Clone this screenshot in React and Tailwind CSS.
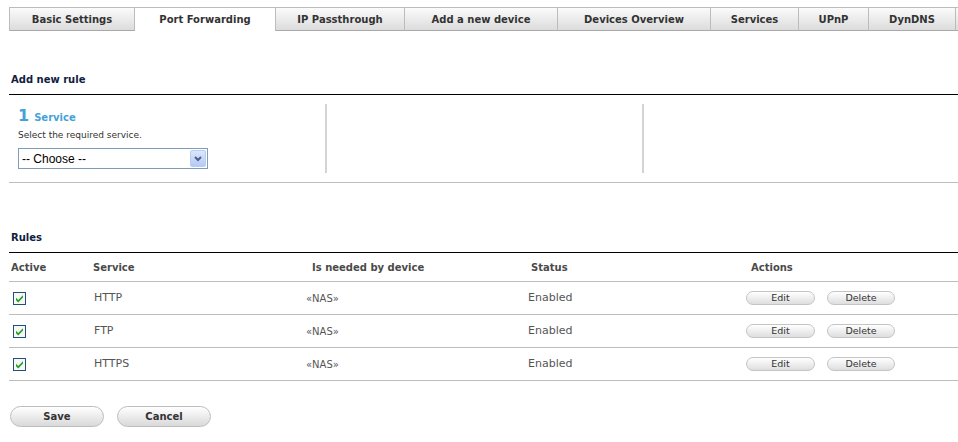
import React from "react";

// Tab bar entries with their measured widths
const tabs = [
  { label: "Basic Settings", w: "w-[125px]" },
  { label: "Port Forwarding", w: "w-[141px]", active: true },
  { label: "IP Passthrough", w: "w-[129px]" },
  { label: "Add a new device", w: "w-[153px]" },
  { label: "Devices Overview", w: "w-[153px]" },
  { label: "Services", w: "w-[88px]" },
  { label: "UPnP", w: "w-[70px]" },
  { label: "DynDNS", w: "w-[87px]" },
  { label: "", w: "w-[40px]" },
];

const rules = [
  { service: "HTTP", device: "«NAS»", status: "Enabled" },
  { service: "FTP", device: "«NAS»", status: "Enabled" },
  { service: "HTTPS", device: "«NAS»", status: "Enabled" },
];

const Checkbox = () => (
  <svg width="13" height="13" viewBox="0 0 13 13">
    <rect x="0.5" y="0.5" width="12" height="12" fill="#f7f7f3" stroke="#1c5180" />
    <path d="M3 5.8 L5.2 8 L10 3.2 L10 5.6 L5.2 10.4 L3 8.2 Z" fill="#21a121" />
  </svg>
);

const SmallButton = ({ children, w }) => (
  <button
    className={`${w} h-[14px] rounded-full border border-[#c4c4c4] bg-gradient-to-b from-white to-[#dedede] text-[9.5px] leading-[12px] text-[#333] font-['DejaVu_Sans',sans-serif]`}
  >
    {children}
  </button>
);

const BigButton = ({ children }) => (
  <button className="w-[94px] h-[21px] rounded-full border border-[#bdbdbd] bg-gradient-to-b from-white to-[#d9d9d9] text-[10px] font-bold text-[#333] font-['DejaVu_Sans',sans-serif]">
    {children}
  </button>
);

export default function App() {
  return (
    <div className="w-full min-h-[442px] bg-white font-['DejaVu_Sans',sans-serif] overflow-hidden">
      {/* Tabs */}
      <div className="pt-[7px] pl-[9px] flex whitespace-nowrap">
        <div className="flex border-l border-[#bcbcbc]">
          {tabs.map((t, i) => (
            <div
              key={i}
              className={`${t.w} shrink-0 h-[24px] flex items-center justify-center border-t border-r border-[#bcbcbc] text-[10px] font-bold text-[#333] ${
                t.active
                  ? "bg-white"
                  : "border-b border-b-[#a9a9a9] bg-gradient-to-b from-[#fbfbfb] to-[#dcdcdc]"
              }`}
            >
              {t.label}
            </div>
          ))}
        </div>
      </div>

      <div className="pl-[9px]">
        {/* Add new rule */}
        <div className="pt-[42px] pb-[7px] pl-[2px] leading-[14px] text-[10px] font-bold text-[#10213f] border-b border-black">
          Add new rule
        </div>
        <div className="grid grid-cols-3 border-b border-[#bdbdbd]">
          <div className="my-[9px] h-[69px] pl-[9px] pt-[4px]">
            <div className="leading-[16px] font-bold text-[#45a2d8]">
              <span className="text-[16px]">1</span>
              <span className="text-[10px] ml-[5px]">Service</span>
            </div>
            <div className="mt-[3px] text-[9px] leading-[12px] text-[#333]">
              Select the required service.
            </div>
            <div className="mt-[7px] w-[190px] h-[21px] border border-[#7f9db9] bg-white flex items-center justify-between pl-[3px] pr-[1px]">
              <span className="text-[12px] font-['Liberation_Sans',sans-serif] text-black">
                -- Choose --
              </span>
              <div className="w-[16px] h-[17px] rounded-[2px] border border-[#b9cdf3] bg-gradient-to-b from-[#dce7fd] to-[#b5c9f5] flex items-center justify-center">
                <svg width="8" height="6" viewBox="0 0 8 6">
                  <path d="M1 1 L4 4 L7 1" fill="none" stroke="#4d6185" strokeWidth="2" />
                </svg>
              </div>
            </div>
          </div>
          <div className="my-[9px] h-[69px] border-l-2 border-[#d4d4d4]" />
          <div className="my-[9px] h-[69px] border-l-2 border-[#d4d4d4]" />
        </div>

        {/* Rules */}
        <div className="pt-[48px] pb-[7px] pl-[2px] leading-[14px] text-[10px] font-bold text-[#10213f] border-b border-black">
          Rules
        </div>
        <div className="grid grid-cols-[80px_213px_222px_218px_1fr] h-[29px] items-center border-b border-[#bdbdbd] text-[10px] font-bold text-[#4a4a4a]">
          <div className="pl-[2px]">Active</div>
          <div className="pl-[4px]">Service</div>
          <div className="pl-[10px]">Is needed by device</div>
          <div className="pl-[7px]">Status</div>
          <div className="pl-[9px]">Actions</div>
        </div>
        {rules.map((r, i) => (
          <div
            key={i}
            className="grid grid-cols-[80px_213px_222px_218px_1fr] h-[33px] items-center border-b border-[#bdbdbd] text-[11px] text-[#555]"
          >
            <div className="pl-[4px] flex">
              <Checkbox />
            </div>
            <div className="pl-[5px]">{r.service}</div>
            <div className="pl-[4px] text-[10px]">{r.device}</div>
            <div className="pl-[4px]">{r.status}</div>
            <div className="pl-[4px] flex gap-[12px]">
              <SmallButton w="w-[69px]">Edit</SmallButton>
              <SmallButton w="w-[68px]">Delete</SmallButton>
            </div>
          </div>
        ))}

        <div className="mt-[25px] pl-[1px] flex gap-[13px]">
          <BigButton>Save</BigButton>
          <BigButton>Cancel</BigButton>
        </div>
      </div>
    </div>
  );
}
